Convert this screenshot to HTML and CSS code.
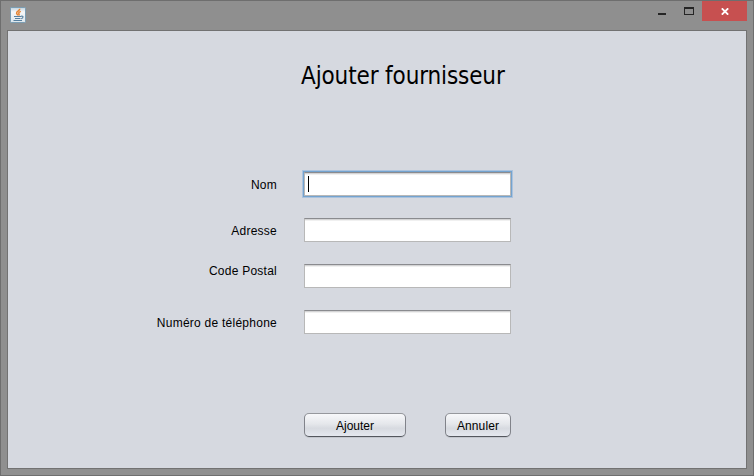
FILE: index.html
```html
<!DOCTYPE html>
<html lang="fr">
<head>
<meta charset="utf-8">
<title>Ajouter fournisseur</title>
<link rel="stylesheet" href="styles.css">
</head>
<body>
<div class="window">
  <header class="titlebar">
    <svg class="app-icon" width="16" height="16" viewBox="0 0 16 16">
      <defs><linearGradient id="g" x1="0" y1="0" x2="0" y2="1"><stop offset="0" stop-color="#c0d2de"/><stop offset=".3" stop-color="#f6f7f8"/><stop offset="1" stop-color="#dce5eb"/></linearGradient></defs>
      <rect x=".5" y=".5" width="15" height="15" rx=".7" fill="url(#g)" stroke="#7b9db3"/>
      <path d="M9.8 1.8C9.8 4 6.3 4.3 6.6 6.1c.1 1 1 1.3 1.2 2.3M10.8 4.4C8.6 5.4 8.4 6 9 6.8c.4.6.2 1-.3 1.6" fill="none" stroke="#e58433" stroke-width="1.5"/>
      <path d="M4 9.5h7M5 11.5h5.5M3.5 13.5h8.5M11 9.3c2.6-.8 2.7 1.6.2 2.4" fill="none" stroke="#5780a0" stroke-width="1.2"/>
    </svg>
    <div class="controls">
      <svg class="control minimize" width="8" height="2"><path d="M0 0h8v2H0z" fill="#252525"/></svg>
      <svg class="control maximize" width="10" height="8"><path d="M0 0h10v8H0zM1 2v5h8V2z" fill="#252525" fill-rule="evenodd"/></svg>
      <div class="close"><svg width="8" height="7" viewBox="0 0 8 7"><path d="M.8.3 7.2 6.7M7.2.3.8 6.7" stroke="#fff" stroke-width="1.8"/></svg></div>
    </div>
  </header>
  <main class="content">
    <h1 class="title">Ajouter fournisseur</h1>
    <form class="form">
      <label class="label">Nom</label><div class="field focused"><span class="caret"></span></div>
      <label class="label">Adresse</label><div class="field"></div>
      <label class="label raised">Code Postal</label><div class="field"></div>
      <label class="label">Numéro de téléphone</label><div class="field"></div>
    </form>
    <div class="actions">
      <button class="button submit" type="button">Ajouter</button>
      <button class="button cancel" type="button">Annuler</button>
    </div>
  </main>
</div>
</body>
</html>
```
FILE: styles.css
```css
* { box-sizing: border-box; }
body { margin: 0; overflow: hidden; }
.window {
  display: flex;
  flex-direction: column;
  width: 754px;
  height: 476px;
  padding: 0 6px 6px;
  border: 1px solid #6e6e6e;
  background: #8f8f8f;
  font: 12px "Liberation Sans", sans-serif;
  color: #000;
}
.titlebar { display: flex; justify-content: space-between; height: 29px; flex: none; }
.app-icon { margin: 6px 0 0 3px; }
.controls { display: flex; align-items: flex-start; }
.minimize { margin: 12px 18px 0 0; }
.maximize { margin: 6px 8px 0 0; }
.close {
  display: flex;
  align-items: center;
  justify-content: center;
  width: 45px;
  height: 20px;
  background: #c75050;
}
.content {
  flex: 1;
  border: 1px solid #727272;
  background: #d6d9e0;
}
.title {
  margin: 29px 0 0 293px;
  height: 32px;
  font: 24px/32px "DejaVu Sans Condensed", "DejaVu Sans", sans-serif;
  letter-spacing: -0.13px;
  white-space: nowrap;
}
.form {
  display: grid;
  grid-template-columns: 269px 207px;
  grid-auto-rows: 24px;
  gap: 22px 27px;
  margin-top: 80px;
}
.label { line-height: 24px; text-align: right; padding-top: 1px; white-space: nowrap; letter-spacing: 0.25px; }
.raised { margin-top: -6px; }
.field {
  height: 24px;
  border: 1px solid #b8b8b8;
  border-top-color: #8a8b8f;
  background: linear-gradient(#d4d4d5 0 1px, #f0f0f0 1px 2px, #fff 2px);
}
.focused { box-shadow: 0 0 0 1px #74a3cf, 0 0 0 2px #abc3de; }
.caret { display: block; width: 1px; height: 16px; margin: 3px 0 0 3px; background: #000; }
.actions { display: flex; gap: 39px; margin: 79px 0 0 296px; }
.button {
  height: 24px;
  padding: 1px 0 0;
  border: 1px solid #81838a;
  border-top-color: #96989d;
  border-bottom-color: #54575e;
  border-radius: 5px;
  background: linear-gradient(#f7f8fa, #e5e7eb 45%, #d7dae0 65%, #e5e8ef);
  box-shadow: 0 1px 0 #c3c6cd;
  font: inherit;
  color: #000;
}
.submit { width: 102px; }
.cancel { width: 66px; letter-spacing: 0.1px; }
```
